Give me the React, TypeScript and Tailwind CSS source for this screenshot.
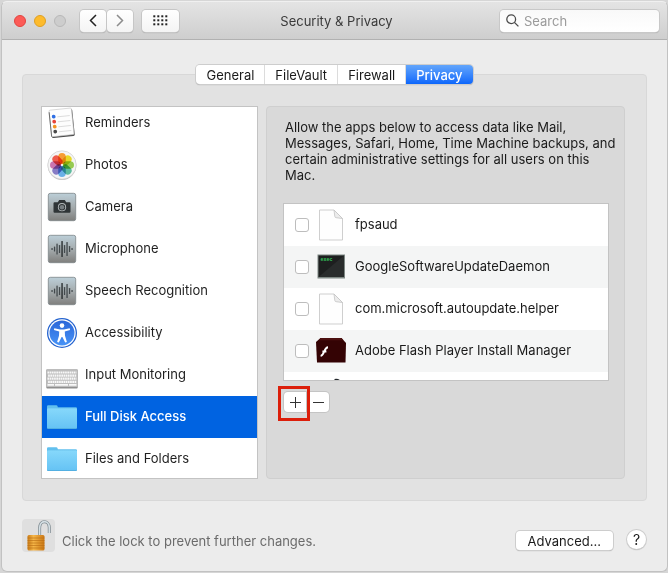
import React from "react";

function RemindersIcon() {
  const dots = ["#2f6fe4", "#e8453c", "#f39323", "#4a4a4a"];
  return (
    <svg viewBox="0 0 32 32" className="size-8" aria-hidden="true">
      <g transform="rotate(-6 16 16)">
        <rect x="4.500" y="3" width="23" height="27" rx="1.500" fill="#4b4b4b" />
        <rect x="4.300" y="2" width="22.500" height="26.600" rx="1" fill="#fdfdfd" stroke="#c4c4c4" strokeWidth="0.600" />
        <path d="M4.300 4v24.600" stroke="#666" strokeWidth="0.900" />
        {dots.map((c, i) => (
          <g key={c}>
            <circle cx="8.400" cy={8.8 + i * 5} r="1.900" fill={c} />
            <path d={`M12 ${9.4 + i * 5}h12.500`} stroke="#d5d5d5" strokeWidth="0.800" />
          </g>
        ))}
      </g>
    </svg>
  );
}

function PhotosIcon() {
  const petals = ["#f7941d", "#e6d510", "#8cc63f", "#4db596", "#5aa9e6", "#7a6fc0", "#c667a8", "#ee4a3a"];
  return (
    <svg viewBox="0 0 32 32" className="size-8" aria-hidden="true">
      <circle cx="16" cy="16.600" r="14.300" fill="#bdbdbd" />
      <circle cx="16" cy="16" r="14.200" fill="#f5f5f5" stroke="#cfcfcf" strokeWidth="0.700" />
      <g className="isolate">
        {petals.map((c, i) => (
          <rect
            key={c}
            x="12.200"
            y="4"
            width="7.600"
            height="11"
            rx="3.800"
            fill={c}
            opacity="0.900"
            transform={`rotate(${i * 45} 16 16)`}
            className="mix-blend-multiply"
          />
        ))}
      </g>
    </svg>
  );
}

function Tile({ id, children }: { id: string; children: React.ReactNode }) {
  return (
    <svg viewBox="0 0 32 32" className="size-8" aria-hidden="true">
      <defs>
        <linearGradient id={id} x1="0" y1="0" x2="0" y2="1">
          <stop offset="0" stopColor="#bccfd8" />
          <stop offset="0.500" stopColor="#a5acae" />
          <stop offset="1" stopColor="#7f7f7d" />
        </linearGradient>
      </defs>
      <rect x="2.300" y="2.300" width="27.400" height="27.400" rx="2" fill={`url(#${id})`} stroke="#7c8488" strokeWidth="0.800" />
      {children}
    </svg>
  );
}

function CameraIcon() {
  return (
    <Tile id="tile-camera">
      <path d="M8.500 11.300h3.300l1.400-2.200h5.600l1.400 2.200h3.300a1 1 0 0 1 1 1v8.400a1 1 0 0 1-1 1h-15a1 1 0 0 1-1-1v-8.400a1 1 0 0 1 1-1z" fill="#2f3436" />
      <circle cx="16" cy="16.200" r="4.100" fill="#b4babc" />
      <circle cx="16" cy="16.200" r="3.200" fill="#2f3436" />
      <circle cx="16" cy="16.200" r="2.300" fill="#777e81" />
    </Tile>
  );
}

function WaveIcon({ id }: { id: string }) {
  const bars = [2, 5, 11, 8, 16, 8, 14, 6, 2];
  return (
    <Tile id={id}>
      {bars.map((h, i) => (
        <rect
          key={i}
          x={5.4 + i * 2.5}
          y={16 - h / 2}
          width="1.300"
          height={h}
          rx="0.600"
          fill={i === 4 ? "#1f2426" : "#42494c"}
        />
      ))}
    </Tile>
  );
}

function AccessibilityIcon() {
  return (
    <svg viewBox="0 0 32 32" className="size-8" aria-hidden="true">
      <defs>
        <linearGradient id="acc" x1="0" y1="0" x2="0" y2="1">
          <stop offset="0" stopColor="#2a66d8" />
          <stop offset="1" stopColor="#4793f7" />
        </linearGradient>
      </defs>
      <circle cx="16" cy="16" r="15" fill="#2463cf" />
      <circle cx="16" cy="16" r="13.700" fill="#fff" />
      <circle cx="16" cy="16" r="12.500" fill="url(#acc)" />
      <circle cx="16" cy="8.600" r="2.300" fill="#fff" />
      <path d="M8.300 11.300l5.700 1.200h4l5.700-1.200.4 1.600-5.300 1.500.2 4.300 1.900 6.200-1.700.6L16.400 20h-.8l-2.800 5.500-1.700-.6 1.900-6.200.2-4.300-5.300-1.500z" fill="#fff" />
    </svg>
  );
}

function KeyboardIcon() {
  return (
    <svg viewBox="0 0 32 32" className="size-8" aria-hidden="true">
      <rect x="0.300" y="10.500" width="31.400" height="19" rx="1" fill="#8f8f8f" />
      <rect x="0.300" y="10" width="31.400" height="18" rx="1" fill="#bdbdbd" />
      {[0, 1, 2, 3].map((r) => (
        <path
          key={r}
          d={`M${1.5 + (r % 2) * 0.6} ${13.5 + r * 3.1}H30.500`}
          stroke="#f8f8f8"
          strokeWidth="2.200"
          strokeDasharray="1.700 0.500"
        />
      ))}
      <path d="M1.500 25.800h6.500M9 25.800h13M23 25.800h7.500" stroke="#f8f8f8" strokeWidth="1.800" />
    </svg>
  );
}

function FolderIcon({ id }: { id: string }) {
  return (
    <svg viewBox="0 0 32 32" className="size-8" aria-hidden="true">
      <defs>
        <linearGradient id={id} x1="0" y1="0" x2="0" y2="1">
          <stop offset="0" stopColor="#86d8fb" />
          <stop offset="1" stopColor="#66c3f4" />
        </linearGradient>
      </defs>
      <path d="M1 5.500q0-1.200 1.200-1.200h8q1 0 1.300.8l.3 1.200h18q1.200 0 1.200 1.200V20H1z" fill="#62c0ee" />
      <rect x="1" y="7.300" width="30" height="20.700" rx="0.900" fill="#4ca9dc" />
      <rect x="1" y="7.300" width="30" height="19.900" rx="0.900" fill={`url(#${id})`} />
    </svg>
  );
}

function DocIcon() {
  return (
    <svg viewBox="0 0 32 32" className="size-8" aria-hidden="true">
      <path d="M4.500 1h14.500l8.500 8.500v21.500h-23z" fill="#fefefe" stroke="#c9c9c9" strokeWidth="0.900" />
      <path d="M19 1l.8 6.500q.2 1 1.200 1.200l6.500.8z" fill="#ececec" stroke="#c4c4c4" strokeWidth="0.800" />
    </svg>
  );
}

function ExecIcon() {
  return (
    <svg viewBox="0 0 32 32" className="size-8" aria-hidden="true">
      <rect x="2.500" y="3.500" width="27.500" height="24" fill="#7d8783" />
      <rect x="3.500" y="4.500" width="25.500" height="21.500" fill="#1d1f1f" />
      <path d="M29 4.500v21.500H3.500z" fill="#292c2c" />
      <text x="5.500" y="10" fontSize="5" fontWeight="700" fill="#35c65d" fontFamily="Liberation Mono, monospace">
        exec
      </text>
    </svg>
  );
}

function FlashIcon() {
  return (
    <svg viewBox="0 0 32 32" className="size-8" aria-hidden="true">
      <path d="M5.500 3h21l4.500 5-.5 19.500h-28.500L1 7z" fill="#340304" />
      <path d="M5.500 3h21l2 2.200H3.800z" fill="#4c1010" />
      <path d="M13 12.300c-4 .2-3.600 8.200-7.400 8.600M7.400 16.500h4" stroke="#fff" strokeWidth="1.900" fill="none" />
    </svg>
  );
}

function HelperIcon() {
  return (
    <svg viewBox="0 0 32 32" className="size-8" aria-hidden="true">
      <path d="M11 4.500q2-1.500 4.500-1l-1 2.500h-4zM18.500 2q5-1 8 4h-4.500q-.5-2.500-3.500-2.800z" fill="#23272b" />
    </svg>
  );
}

function LockIcon() {
  return (
    <svg viewBox="0 0 33 33" className="size-[33px]" aria-hidden="true">
      <defs>
        <linearGradient id="brass" x1="0" y1="0" x2="1" y2="0">
          <stop offset="0" stopColor="#c97a16" />
          <stop offset="0.350" stopColor="#f5b648" />
          <stop offset="1" stopColor="#cb7714" />
        </linearGradient>
      </defs>
      <path d="M17.600 16.500V9.500C17.600 0 27 1 27.300 8.500V14" fill="none" stroke="#7d898f" strokeWidth="3" />
      <path d="M17.600 16.500V9.500C17.600 0 27 1 27.300 8.500V14" fill="none" stroke="#d4dfe4" strokeWidth="1.600" />
      <rect x="5.500" y="16" width="17" height="15.500" rx="1.500" fill="url(#brass)" />
      <path d="M5.500 19h17M5.500 21.500h17M5.500 24h17M5.500 26.500h17M5.500 29h17" stroke="#b76b12" strokeWidth="0.600" />
    </svg>
  );
}

const services = [
  { name: "Reminders", icon: <RemindersIcon /> },
  { name: "Photos", icon: <PhotosIcon /> },
  { name: "Camera", icon: <CameraIcon /> },
  { name: "Microphone", icon: <WaveIcon id="tile-mic" /> },
  { name: "Speech Recognition", icon: <WaveIcon id="tile-speech" /> },
  { name: "Accessibility", icon: <AccessibilityIcon /> },
  { name: "Input Monitoring", icon: <KeyboardIcon /> },
  { name: "Full Disk Access", icon: <FolderIcon id="folder-a" />, selected: true },
  { name: "Files and Folders", icon: <FolderIcon id="folder-b" /> },
];

const apps = [
  { name: "fpsaud", icon: <DocIcon /> },
  { name: "GoogleSoftwareUpdateDaemon", icon: <ExecIcon /> },
  { name: "com.microsoft.autoupdate.helper", icon: <DocIcon /> },
  { name: "Adobe Flash Player Install Manager", icon: <FlashIcon /> },
];

const tabs = ["General", "FileVault", "Firewall", "Privacy"];

const toolButton =
  "flex h-[22px] items-center justify-center rounded bg-gradient-to-b from-white to-[#f4f4f4] shadow-[0_0_0_1px_#c6c6c6,0_1px_1px_#9a9a9a]";

function TitleBar() {
  return (
    <header className="grid h-[38px] grid-cols-[1fr_auto_1fr] items-center rounded-t-[5px] border-b border-[#b1b1b1] bg-gradient-to-b from-[#e4e4e4] to-[#cecece] pr-2 pl-3">
      <div className="flex items-center">
        <div className="flex gap-2">
          <button aria-label="Close" className="size-3 rounded-full border border-[#e2443f] bg-[#fc5b57]" />
          <button aria-label="Minimize" className="size-3 rounded-full border border-[#dfa023] bg-[#fdbb2d]" />
          <button aria-label="Zoom" disabled className="size-3 rounded-full border border-[#b8b8b8] bg-[#cdcdcd]" />
        </div>
        <div className="ml-3.5 flex gap-px">
          <button aria-label="Back" className={`${toolButton} w-[26px]`}>
            <svg viewBox="0 0 8 13" className="h-[13px] w-2" fill="none" stroke="#222" strokeWidth="1.500">
              <path d="M7 1L1.500 6.500 7 12" />
            </svg>
          </button>
          <button aria-label="Forward" className={`${toolButton} w-[26px]`}>
            <svg viewBox="0 0 8 13" className="h-[13px] w-2" fill="none" stroke="#8c8c8c" strokeWidth="1.500">
              <path d="M1 1l5.500 5.500L1 12" />
            </svg>
          </button>
        </div>
        <button aria-label="Show all" className={`${toolButton} ml-[9px] w-[37px]`}>
          <svg viewBox="0 0 15 11" className="h-[11px] w-[15px]" fill="#222">
            {[0, 1, 2].map((r) =>
              [0, 1, 2, 3].map((c) => <rect key={`${r}${c}`} x={c * 4 + 0.3} y={r * 4 + 0.3} width="2" height="2" />),
            )}
          </svg>
        </button>
      </div>
      <h1 className="text-[13px] leading-4 text-[#3a3a3a]">Security &amp; Privacy</h1>
      <label className="flex h-[22px] w-[159px] items-center gap-[5px] justify-self-end rounded bg-gradient-to-b from-[#f9f9f9] to-white pl-1.5 shadow-[0_0_0_1px_#c8c8c8,0_1px_1px_#9a9a9a]">
        <svg viewBox="0 0 13 13" className="size-[13px] shrink-0" fill="none" stroke="#4a4a4a" strokeWidth="1.300">
          <circle cx="5.200" cy="5.200" r="4.400" />
          <path d="M8.400 8.400l4 4" />
        </svg>
        <input
          type="text"
          aria-label="Search"
          placeholder="Search"
          className="w-0 flex-1 bg-transparent text-[13px] leading-4 outline-none placeholder:text-[#9b9b9b]"
        />
      </label>
    </header>
  );
}

function ServiceList() {
  return (
    <nav aria-label="Services" className="h-[373px] w-[217px] shrink-0 overflow-hidden border border-[#c3c3c3] bg-white">
      <ul className="-mt-[5px]">
        {services.map((s) => (
          <li key={s.name}>
            <button
              className={`flex h-[42px] w-full items-center gap-[7px] pl-1 text-left text-[13px] leading-4 ${
                s.selected ? "bg-[#0063e1] font-medium text-white" : "text-[#1f1f1f]"
              }`}
            >
              {s.icon}
              <span className="pb-0.5">{s.name}</span>
            </button>
          </li>
        ))}
      </ul>
    </nav>
  );
}

function AppPanel() {
  return (
    <section className="min-w-0 flex-1 rounded border border-[#cfcfcf] bg-[#d9d9d9] pt-3 pr-[15px] pl-4">
      <p className="pl-0.5 text-[13px] leading-4 whitespace-nowrap text-[#1a1a1a]">
        Allow the apps below to access data like Mail,
        <br />
        Messages, Safari, Home, Time Machine backups, and
        <br />
        certain administrative settings for all users on this
        <br />
        Mac.
      </p>
      <ul className="mt-5 h-[178px] overflow-hidden border border-[#c3c3c3] bg-white">
        {apps.map((a) => (
          <li key={a.name} className="even:bg-[#f4f5f5]">
            <label className="flex h-[42px] items-center pl-[11px] text-[13px] leading-4 text-[#1a1a1a]">
              <input
                type="checkbox"
                className="size-3.5 appearance-none rounded-[3px] border border-[#bdbdbd] bg-white checked:bg-[#0063e1]"
              />
              <span className="ml-1.5">{a.icon}</span>
              <span className="ml-2 pb-0.5">{a.name}</span>
            </label>
          </li>
        ))}
        <li className="flex h-[42px] items-center pl-8">
          <HelperIcon />
        </li>
      </ul>
      <div className="relative mt-[11px] ml-px flex">
        <button
          aria-label="Add"
          className="flex h-5 w-[23px] items-center justify-center rounded-l bg-white shadow-[0_0_0_1px_#c4c4c4]"
        >
          <svg viewBox="0 0 11 11" className="size-[11px]" stroke="#333" strokeWidth="1">
            <path d="M5.500 0v11M0 5.500h11" />
          </svg>
        </button>
        <button
          aria-label="Remove"
          className="flex h-5 w-[22px] items-center justify-center rounded-r bg-white shadow-[0_0_0_1px_#c4c4c4]"
        >
          <svg viewBox="0 0 11 11" className="size-[11px]" stroke="#333" strokeWidth="1">
            <path d="M0 5.500h11" />
          </svg>
        </button>
        <div className="pointer-events-none absolute -top-1.5 -left-1.5 h-[35px] w-8 border-3 border-[#dc1f0b]" />
      </div>
    </section>
  );
}

export default function App() {
  return (
    <div className="bg-[#d6d6d6] py-px pl-px font-['Inter','Liberation_Sans',sans-serif]">
      <main className="rounded-[6px] border border-[#c2c2c2] border-t-[#f0f0f0] bg-[#ececec]">
        <TitleBar />
        <div className="px-5 pt-[25px]">
          <div role="tablist" className="relative z-10 mx-auto -mb-2.5 flex w-fit rounded shadow-[0_0_0_1px_#cdcdcd,0_1px_1px_#999]">
            {tabs.map((t) => (
              <button
                key={t}
                role="tab"
                aria-selected={t === "Privacy"}
                className="h-[19px] border-r border-[#dcdcdc] bg-white px-2.5 text-[13px] leading-4 text-[#1a1a1a] first:rounded-l last:rounded-r last:border-r-0 aria-selected:bg-gradient-to-b aria-selected:from-[#62a5fb] aria-selected:to-[#0a66fb] aria-selected:font-medium aria-selected:text-white"
              >
                {t}
              </button>
            ))}
          </div>
          <div className="flex gap-2 rounded border border-[#d8d8d8] bg-[#e2e2e2] pt-[31px] pr-[21px] pb-[21px] pl-[18px]">
            <ServiceList />
            <AppPanel />
          </div>
        </div>
        <footer className="flex items-center pt-[18px] pr-[21px] pb-[19px] pl-5">
          <button aria-label="Lock" className="rounded bg-[#dfdfdf]">
            <LockIcon />
          </button>
          <p className="ml-[7px] flex-1 pt-2.5 text-[13px] leading-4 text-[#6b6b6b]">
            Click the lock to prevent further changes.
          </p>
          <button className="mt-2.5 h-[19px] rounded bg-white px-3 text-[13px] leading-4 text-[#1a1a1a] shadow-[0_0_0_1px_#cdcdcd,0_1px_1px_#999]">
            Advanced...
          </button>
          <button
            aria-label="Help"
            className="mt-2 ml-3.5 size-[19px] rounded-full bg-white text-[14px] leading-4 text-[#1a1a1a] shadow-[0_0_0_1px_#cdcdcd,0_1px_1px_#999]"
          >
            ?
          </button>
        </footer>
      </main>
    </div>
  );
}
